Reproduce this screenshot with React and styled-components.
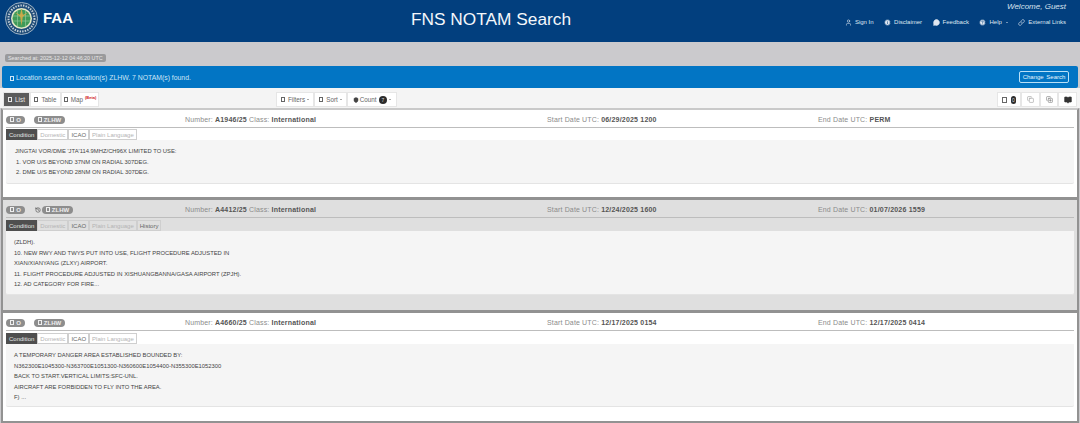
import React from 'react';
import styled, { createGlobalStyle } from 'styled-components';
import { User, Info, MessageCircle, HelpCircle, Link, Copy, CopyPlus, BookOpen, Shield, History } from 'lucide-react';

const GlobalStyle = createGlobalStyle`
  html, body { margin: 0; padding: 0; background: #fff; }
  body { font-family: "Liberation Sans", Arial, sans-serif; color: #333; }
  * { box-sizing: border-box; }
`;

const Page = styled.div`
  width: 1080px;
  height: 423px;
  overflow: hidden;
  background: #cbcacd;
  display: flex;
  flex-direction: column;
`;

const Header = styled.header`
  height: 42px;
  background: #023f7e;
  color: #fff;
  display: grid;
  grid-template-columns: 300px 1fr 398px;
  flex-shrink: 0;
`;

const Brand = styled.div`
  display: flex;
  align-items: flex-start;
  gap: 5px;
  padding: 2px 0 0 5px;
`;

const BrandName = styled.span`
  font-size: 15px;
  font-weight: 700;
  line-height: 32px;
`;

const Title = styled.h1`
  margin: 0;
  padding-top: 7px;
  font-size: 17.3px;
  font-weight: 400;
  line-height: 24px;
  text-align: center;
  white-space: nowrap;
  color: #f4f7fb;
`;

const HeaderRight = styled.div`
  display: flex;
  flex-direction: column;
  align-items: flex-end;
  padding: 1px 14px 0 0;
`;

const Welcome = styled.span`
  font-size: 8px;
  line-height: 11px;
  font-style: italic;
  color: #d8e2ee;
`;

const HeaderNav = styled.nav`
  display: flex;
  gap: 10.5px;
  margin-top: 5px;
`;

const NavItem = styled.span`
  display: flex;
  align-items: center;
  gap: 3px;
  font-size: 6px;
  line-height: 11px;
  white-space: nowrap;
  color: #dfe7f1;
`;

const Band = styled.div`
  height: 24px;
  padding: 12px 0 0 5px;
  flex-shrink: 0;
`;

const Stamp = styled.span`
  display: inline-block;
  height: 8px;
  padding: 0 3px;
  background: #9a9a9c;
  border-radius: 2px;
  color: #e8e8e8;
  font-size: 5.4px;
  line-height: 8px;
  vertical-align: top;
`;

const Alert = styled.div`
  height: 22px;
  margin: 0 2px;
  background: #0275c4;
  border-radius: 2px;
  display: flex;
  align-items: center;
  justify-content: space-between;
  padding: 0 9px 0 8px;
  color: #cfe6f6;
  font-size: 6.85px;
  flex-shrink: 0;
`;

const Box = styled.span`
  display: inline-block;
  width: ${p => p.$size || 4}px;
  height: ${p => (p.$size || 4) + 1}px;
  border: 0.7px solid currentColor;
  margin-right: 2px;
  vertical-align: -1px;
`;

const ChangeButton = styled.span`
  width: 50px;
  height: 12px;
  border: 1px solid #b9e0f7;
  border-radius: 2px;
  text-align: center;
  line-height: 10px;
  font-size: 6px;
  white-space: nowrap;
  word-spacing: 1px;
  color: #e6f3fb;
`;

const Toolbar = styled.div`
  height: 20px;
  padding: 4px 3px 0 3px;
  background: #f4f4f4;
  display: grid;
  grid-template-columns: 273px auto 1fr;
  flex-shrink: 0;
`;

const Group = styled.div`
  display: flex;
  justify-content: ${p => p.$end ? 'flex-end' : 'flex-start'};
`;

const ToolButton = styled.span`
  width: ${p => p.$width}px;
  height: 15px;
  background: ${p => p.$active ? '#5b5b5b' : '#fff'};
  color: ${p => p.$active ? '#e8e8e8' : '#666'};
  border: 0.5px solid #e6e6e6;
  display: flex;
  align-items: center;
  justify-content: center;
  gap: 1px;
  font-size: 6.3px;
  white-space: nowrap;
`;

const Beta = styled.sup`
  color: #d02020;
  font-size: 4px;
  font-weight: 700;
  line-height: 4px;
  margin: -4px 0 0 1px;
`;

const Caret = styled.span`
  width: 0;
  height: 0;
  margin-left: 1px;
  border: 1.5px solid transparent;
  border-top-color: ${p => p.$color || '#555'};
  border-bottom-width: 0;
`;

const CountBadge = styled.span`
  background: #2b2b2b;
  color: #ddd;
  border-radius: 4px;
  padding: 0 ${p => p.$pad ?? 3}px;
  font-size: 5px;
  line-height: 8px;
  margin-left: 1px;
`;

const List = styled.main`
  display: flex;
  flex-direction: column;
  flex: 1;
`;

const Card = styled.article`
  height: ${p => p.$height}px;
  margin: 0 1px;
  padding: 1px 3px 0 3px;
  background: ${p => p.$dim ? '#dfdfdf' : '#fff'};
  border-style: solid;
  border-color: #929292;
  border-top-color: ${p => p.$first ? '#c9c9c9' : '#929292'};
  border-width: ${p => p.$top}px 2px ${p => p.$bottom || 0}px 2px;
  flex-shrink: 0;
`;

const CardHead = styled.div`
  display: grid;
  grid-template-columns: 28px 151px 362px 271px 1fr;
  align-items: center;
  height: 17px;
  padding-top: 1px;
  border-bottom: 1px solid #bdbdbd;
  font-size: 7px;
  color: #8b8b8b;
`;

const Pill = styled.span`
  display: inline-flex;
  align-items: center;
  justify-content: center;
  height: 8px;
  width: ${p => p.$width}px;
  background: #8d8d8d;
  color: #eee;
  border-radius: 4px;
  font-size: 6px;
  font-weight: 700;
`;

const Keys = styled.span`
  padding-left: ${p => p.$indent || 0}px;
  display: flex;
  align-items: center;
  gap: 1px;
  color: #333;
`;

const Meta = styled.span`
  white-space: nowrap;
  letter-spacing: 0.15px;
  b {
    color: #555;
    letter-spacing: 0.2px;
  }
`;

const Tabs = styled.div`
  display: flex;
  margin-top: ${p => p.$gap}px;
  height: 11px;
`;

const Tab = styled.span`
  background: ${p => p.$active ? '#4f4f4f' : 'transparent'};
  color: ${p => p.$active ? '#e6e6e6' : p.$strong ? '#666' : '#b4b4b4'};
  border: 0.5px solid ${p => p.$active ? '#4f4f4f' : '#cfcfcf'};
  padding: 0 2px;
  font-size: 6px;
  line-height: 10px;
  white-space: nowrap;
`;

const Well = styled.div`
  height: ${p => p.$height}px;
  background: #f5f5f5;
  border-radius: 0 0 2px 2px;
  border-bottom: 1px solid #e4e4e4;
  padding: 6px 10px 0 ${p => p.$indent}px;
  font-size: 5.85px;
  line-height: 10.6px;
  color: #444;
`;

const Line = styled.div`
  white-space: nowrap;
  padding-left: ${p => p.$indent || 0}px;
`;

const Seal = () => (
  <svg width="33" height="33" viewBox="0 0 33 33" aria-hidden="true">
    <circle cx="16.5" cy="16.5" r="16" fill="#1f4c78" stroke="#9fb4c6" strokeWidth="1" />
    <circle cx="16.5" cy="16.5" r="13" fill="none" stroke="#c4d0da" strokeWidth="2" strokeDasharray="1.4 1.2" />
    <circle cx="16.5" cy="16.5" r="10.5" fill="#e3e8c8" />
    <circle cx="16.5" cy="16.5" r="9" fill="#3f9a58" />
    <path d="M8 14h17M8 19h17M12.5 8.5v16M20.5 8.5v16" stroke="#8fc89a" strokeWidth="0.7" fill="none" />
    <path d="M16.5 6.5 18 13l-1.5 11L15 13zM10 10.5l6.5 3 6.5-3-6.5 5.5z" fill="#c9a94a" />
  </svg>
);

const records = [
  {
    number: 'A1946/25', start: '06/29/2025 1200', end: 'PERM', height: 89, wellHeight: 44, top: 2, first: true, tabGap: 1, indent: 9,
    lines: [
      ['JINGTAI VOR/DME \'JTA\'114.9MHZ/CH96X LIMITED TO USE:', 0],
      ['1. VOR U/S BEYOND 37NM ON RADIAL 307DEG.', 1],
      ['2. DME U/S BEYOND 28NM ON RADIAL 307DEG.', 1],
    ],
  },
  {
    number: 'A4412/25', start: '12/24/2025 1600', end: '01/07/2026 1559', height: 113, wellHeight: 64, top: 3, tabGap: 2, dim: true, history: true, indent: 8,
    lines: [
      ['(ZLDH).', 0],
      ['10. NEW RWY AND TWYS PUT INTO USE, FLIGHT PROCEDURE ADJUSTED IN', 0],
      ['XIAN/XIANYANG (ZLXY) AIRPORT.', 0],
      ['11. FLIGHT PROCEDURE ADJUSTED IN XISHUANGBANNA/GASA AIRPORT (ZPJH).', 0],
      ['12. AD CATEGORY FOR FIRE...', 0],
    ],
  },
  {
    number: 'A4660/25', start: '12/17/2025 0154', end: '12/17/2025 0414', height: 113, wellHeight: 63, top: 3, tabGap: 2, bottom: 2, indent: 8,
    lines: [
      ['A TEMPORARY DANGER AREA ESTABLISHED BOUNDED BY:', 0],
      ['N362300E1045300-N363700E1051300-N360600E1054400-N355300E1052300', 0],
      ['BACK TO START.VERTICAL LIMITS:SFC-UNL.', 0],
      ['AIRCRAFT ARE FORBIDDEN TO FLY INTO THE AREA.', 0],
      ['F) ...', 0],
    ],
  },
];

const Record = ({ data }) => (
  <Card $height={data.height} $dim={data.dim} $top={data.top} $bottom={data.bottom} $first={data.first}>
    <CardHead>
      <Pill $width={19}><Box />O</Pill>
      <Keys $indent={data.history ? 1 : 0}>
        {data.history && <History size={6} />}
        <Pill $width={31}><Box />ZLHW</Pill>
      </Keys>
      <Meta>Number: <b>{data.number}</b> Class: <b>International</b></Meta>
      <Meta>Start Date UTC: <b>{data.start}</b></Meta>
      <Meta>End Date UTC: <b>{data.end}</b></Meta>
    </CardHead>
    <Tabs $gap={data.tabGap}>
      <Tab $active>Condition</Tab>
      <Tab>Domestic</Tab>
      <Tab $strong>ICAO</Tab>
      <Tab>Plain Language</Tab>
      {data.history && <Tab $strong>History</Tab>}
    </Tabs>
    <Well $height={data.wellHeight} $indent={data.indent}>
      {data.lines.map(([text, indent]) => (
        <Line key={text} $indent={indent}>{text}</Line>
      ))}
    </Well>
  </Card>
);

export default function App() {
  return (
    <Page>
      <GlobalStyle />
      <Header>
        <Brand>
          <Seal />
          <BrandName>FAA</BrandName>
        </Brand>
        <Title>FNS NOTAM Search</Title>
        <HeaderRight>
          <Welcome>Welcome, Guest</Welcome>
          <HeaderNav>
            <NavItem><User size={7} />Sign In</NavItem>
            <NavItem><Info size={7} fill="#dfe7f1" stroke="#023f7e" />Disclaimer</NavItem>
            <NavItem><MessageCircle size={7} fill="#dfe7f1" />Feedback</NavItem>
            <NavItem><HelpCircle size={7} fill="#dfe7f1" stroke="#023f7e" />Help<Caret $color="#dfe7f1" /></NavItem>
            <NavItem><Link size={7} />External Links</NavItem>
          </HeaderNav>
        </HeaderRight>
      </Header>

      <Band>
        <Stamp>Searched at: 2025-12-12 04:46:20 UTC</Stamp>
      </Band>

      <Alert>
        <span><Box />Location search on location(s) ZLHW. 7 NOTAM(s) found.</span>
        <ChangeButton>Change Search</ChangeButton>
      </Alert>

      <Toolbar>
        <Group>
          <ToolButton $width={27} $active><Box />List</ToolButton>
          <ToolButton $width={31}><Box />Table</ToolButton>
          <ToolButton $width={38}><Box />Map<Beta>(Beta)</Beta></ToolButton>
        </Group>
        <Group>
          <ToolButton $width={38}><Box />Filters<Caret /></ToolButton>
          <ToolButton $width={33}><Box />Sort<Caret /></ToolButton>
          <ToolButton $width={50}><Shield size={6} fill="#444" stroke="#444" />Count<CountBadge>7</CountBadge><Caret /></ToolButton>
        </Group>
        <Group $end>
          <ToolButton $width={24}><Box $size={5} /><CountBadge $pad={1}>0</CountBadge></ToolButton>
          <ToolButton $width={19}><Copy size={7} color="#999" /></ToolButton>
          <ToolButton $width={18}><CopyPlus size={7} color="#777" /></ToolButton>
          <ToolButton $width={19}><BookOpen size={8} fill="#333" color="#333" /></ToolButton>
        </Group>
      </Toolbar>

      <List>
        {records.map(r => <Record key={r.number} data={r} />)}
      </List>
    </Page>
  );
}
